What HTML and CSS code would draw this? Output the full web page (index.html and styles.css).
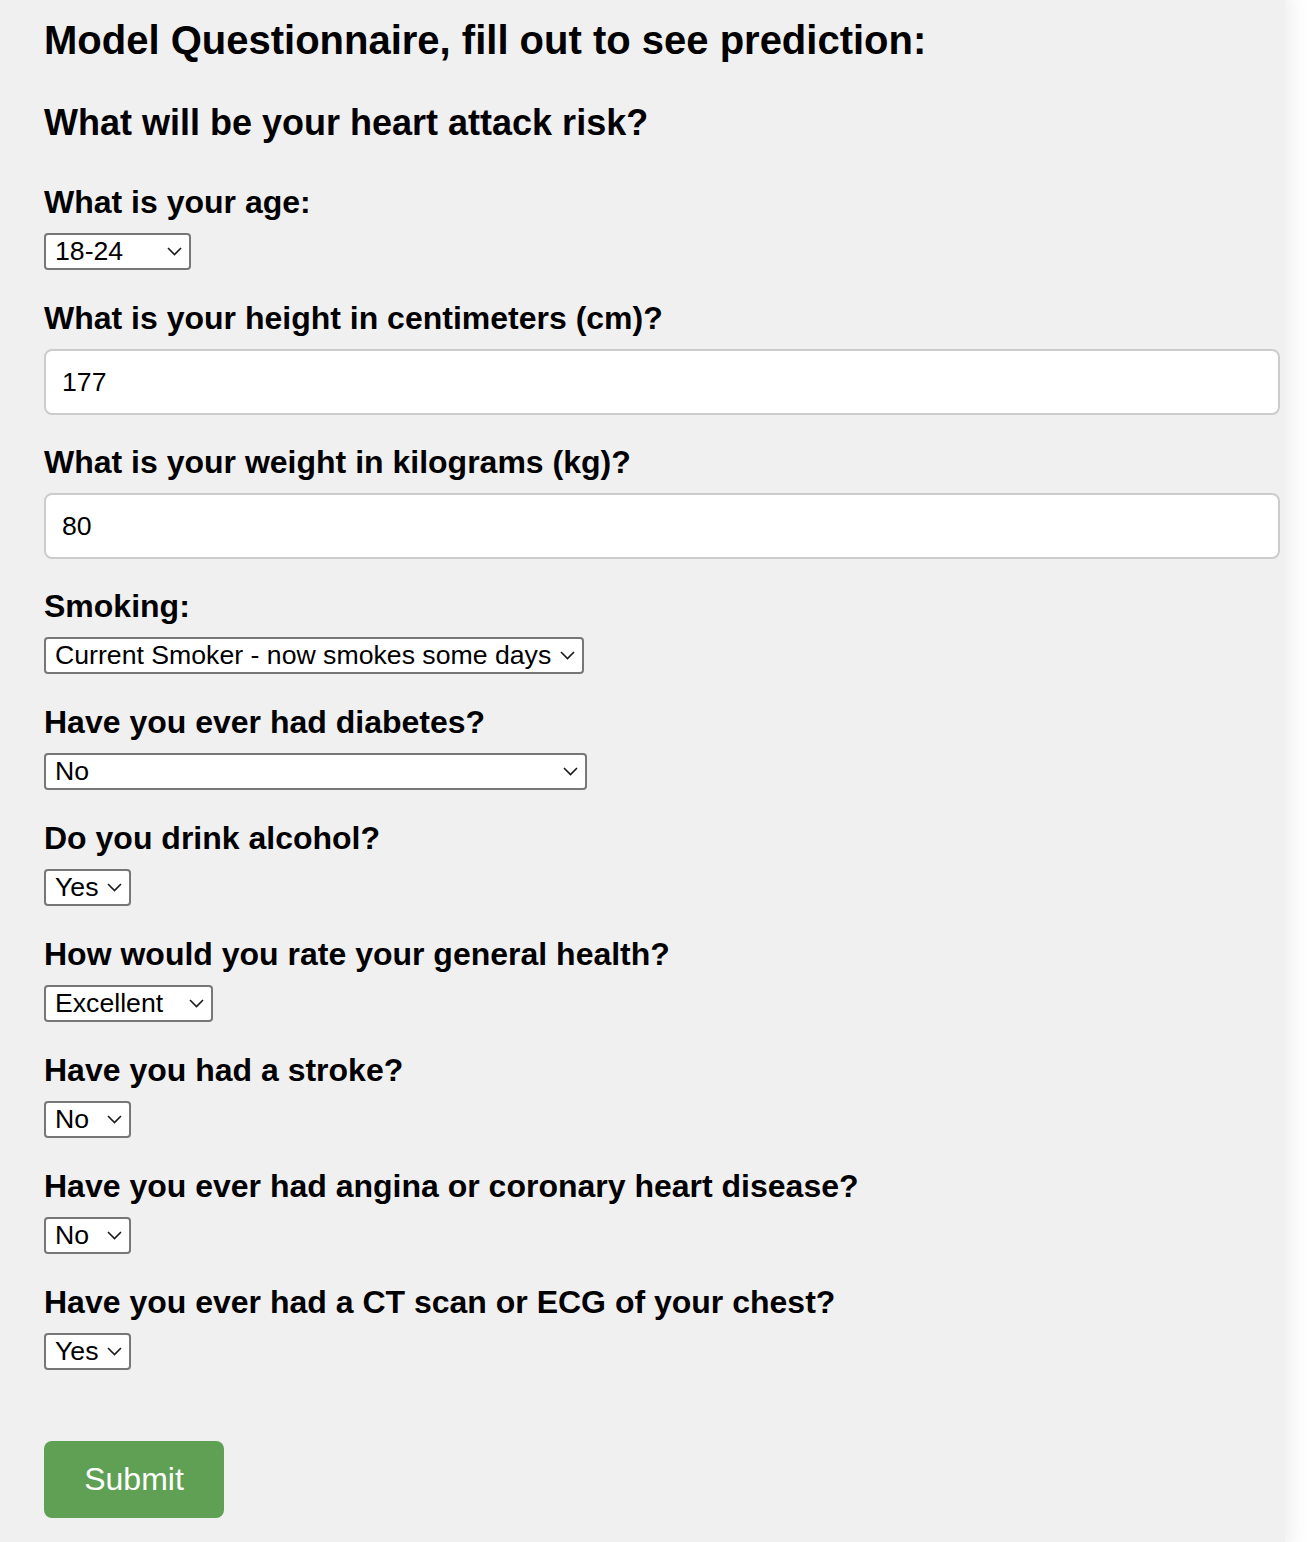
FILE: index.html
```html
<!DOCTYPE html>
<html lang="en">
<head>
<meta charset="utf-8">
<title>Model Questionnaire</title>
<link rel="stylesheet" href="styles.css">
</head>
<body>
<main class="page">
  <h1 class="title">Model Questionnaire, fill out to see prediction:</h1>
  <h2 class="subtitle">What will be your heart attack risk?</h2>
  <form class="form">
    <div class="field">
      <label class="label" for="age">What is your age:</label>
      <span class="select-wrap sel-age">
        <select id="age" class="select">
          <option>18-24</option><option>25-29</option><option>30-34</option><option>35-39</option>
          <option>40-44</option><option>45-49</option><option>50-54</option><option>55-59</option>
          <option>60-64</option><option>65-69</option><option>70-74</option><option>75-79</option><option>80+</option>
        </select>
        <svg class="chev" viewBox="0 0 15 9" aria-hidden="true"><path d="M1 1 L7.5 7.5 L14 1"/></svg>
      </span>
    </div>
    <div class="field field-input">
      <label class="label" for="height">What is your height in centimeters (cm)?</label>
      <input id="height" class="text-input" type="text" value="177">
    </div>
    <div class="field field-input">
      <label class="label" for="weight">What is your weight in kilograms (kg)?</label>
      <input id="weight" class="text-input" type="text" value="80">
    </div>
    <div class="field">
      <label class="label" for="smoking">Smoking:</label>
      <span class="select-wrap sel-smoke">
        <select id="smoking" class="select">
          <option>Current Smoker - now smokes some days</option>
          <option>Current Smoker - now smokes every day</option>
          <option>Former Smoker</option>
          <option>Never Smoked</option>
        </select>
        <svg class="chev" viewBox="0 0 15 9" aria-hidden="true"><path d="M1 1 L7.5 7.5 L14 1"/></svg>
      </span>
    </div>
    <div class="field">
      <label class="label" for="diabetes">Have you ever had diabetes?</label>
      <span class="select-wrap sel-diab">
        <select id="diabetes" class="select">
          <option>No</option>
          <option>Yes</option>
          <option>No, pre-diabetes or borderline diabetes</option>
          <option>Yes, but only during pregnancy (female)</option>
        </select>
        <svg class="chev" viewBox="0 0 15 9" aria-hidden="true"><path d="M1 1 L7.5 7.5 L14 1"/></svg>
      </span>
    </div>
    <div class="field">
      <label class="label" for="alcohol">Do you drink alcohol?</label>
      <span class="select-wrap sel-yn">
        <select id="alcohol" class="select"><option>Yes</option><option>No</option></select>
        <svg class="chev" viewBox="0 0 15 9" aria-hidden="true"><path d="M1 1 L7.5 7.5 L14 1"/></svg>
      </span>
    </div>
    <div class="field">
      <label class="label" for="health">How would you rate your general health?</label>
      <span class="select-wrap sel-health">
        <select id="health" class="select">
          <option>Excellent</option><option>Very good</option><option>Good</option><option>Fair</option><option>Poor</option>
        </select>
        <svg class="chev" viewBox="0 0 15 9" aria-hidden="true"><path d="M1 1 L7.5 7.5 L14 1"/></svg>
      </span>
    </div>
    <div class="field">
      <label class="label" for="stroke">Have you had a stroke?</label>
      <span class="select-wrap sel-yn">
        <select id="stroke" class="select"><option>No</option><option>Yes</option></select>
        <svg class="chev" viewBox="0 0 15 9" aria-hidden="true"><path d="M1 1 L7.5 7.5 L14 1"/></svg>
      </span>
    </div>
    <div class="field">
      <label class="label" for="angina">Have you ever had angina or coronary heart disease?</label>
      <span class="select-wrap sel-yn">
        <select id="angina" class="select"><option>No</option><option>Yes</option></select>
        <svg class="chev" viewBox="0 0 15 9" aria-hidden="true"><path d="M1 1 L7.5 7.5 L14 1"/></svg>
      </span>
    </div>
    <div class="field">
      <label class="label" for="scan">Have you ever had a CT scan or ECG of your chest?</label>
      <span class="select-wrap sel-yn">
        <select id="scan" class="select"><option>Yes</option><option>No</option></select>
        <svg class="chev" viewBox="0 0 15 9" aria-hidden="true"><path d="M1 1 L7.5 7.5 L14 1"/></svg>
      </span>
    </div>
    <button class="submit" type="button">Submit</button>
  </form>
</main>
</body>
</html>
```

FILE: styles.css
```css
* { box-sizing: border-box; }

html, body {
  margin: 0;
  padding: 0;
  background: #ffffff;
}

body {
  font-family: "Liberation Sans", Arial, sans-serif;
  color: #000;
}

.page {
  width: 1285px;
  min-height: 1542px;
  background: #f0f0f0;
  box-shadow: 0 0 18px 8px #f0f0f0;
  padding: 18px 0 24px 44px;
}

.title {
  margin: 0 0 39px;
  font-size: 40px;
  font-weight: bold;
  line-height: normal;
}

.subtitle {
  margin: 0 0 40px;
  font-size: 36px;
  font-weight: bold;
  line-height: normal;
}

.form {
  display: flex;
  flex-direction: column;
  align-items: flex-start;
}

.field {
  display: flex;
  flex-direction: column;
  align-items: flex-start;
  margin-bottom: 30px;
}

.field-input {
  align-self: stretch;
  margin-bottom: 29px;
}

.label {
  display: block;
  font-size: 32px;
  font-weight: bold;
  line-height: normal;
  margin-bottom: 12px;
}

.select-wrap {
  position: relative;
  display: inline-block;
  height: 37px;
}

.select {
  appearance: none;
  -webkit-appearance: none;
  display: block;
  width: 100%;
  height: 37px;
  margin: 0;
  padding: 0 30px 0 9px;
  font-family: "Liberation Sans", Arial, sans-serif;
  font-size: 26.67px;
  line-height: 33px;
  color: #000;
  background: #ffffff;
  border: 2px solid #777777;
  border-radius: 4px;
}

.chev {
  position: absolute;
  right: 9px;
  top: 14px;
  width: 15px;
  height: 9px;
  pointer-events: none;
}

.chev path {
  fill: none;
  stroke: #1a1a1a;
  stroke-width: 1.6;
}

.sel-age { width: 147px; }
.sel-smoke { width: 540px; }
.sel-diab { width: 543px; }
.sel-yn { width: 87px; }
.sel-health { width: 169px; }

.text-input {
  display: block;
  width: 1236px;
  height: 66px;
  margin: 0;
  padding: 0 16px;
  font-family: "Liberation Sans", Arial, sans-serif;
  font-size: 26.67px;
  color: #000;
  background: #ffffff;
  border: 2px solid #cccccc;
  border-radius: 8px;
  outline: none;
}

.submit {
  margin-top: 41px;
  width: 180px;
  height: 77px;
  padding: 0;
  font-family: "Liberation Sans", Arial, sans-serif;
  font-size: 32px;
  color: #ffffff;
  background: #5fa055;
  border: none;
  border-radius: 8px;
  cursor: pointer;
}
```
